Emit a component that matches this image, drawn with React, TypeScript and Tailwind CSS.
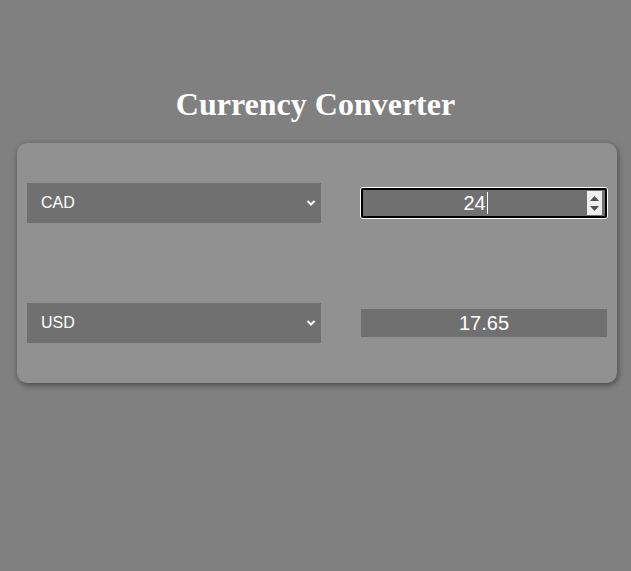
import React, { useState } from 'react';

const rates: Record<string, number> = { CAD: 1, USD: 0.7354, EUR: 0.68, GBP: 0.58 };

const CurrencySelect = ({ value, onChange }: { value: string; onChange: (v: string) => void }) => (
  <div className="relative w-[294px] h-10">
    <select
      value={value}
      onChange={(e) => onChange(e.target.value)}
      className="appearance-none w-full h-full bg-[#707070] text-white text-base pl-[14px] outline-none font-['Liberation_Sans',Arial,sans-serif]"
    >
      {Object.keys(rates).map((c) => (
        <option key={c} value={c}>
          {c}
        </option>
      ))}
    </select>
    {/* chevron */}
    <svg
      className="absolute right-[5px] top-[16px] pointer-events-none"
      width="10"
      height="8"
      viewBox="0 0 10 8"
      fill="none"
      stroke="white"
      strokeWidth="2"
    >
      <path d="M1.5 2l3.5 3.5L8.5 2" />
    </svg>
  </div>
);

export default function App() {
  const [from, setFrom] = useState('CAD');
  const [to, setTo] = useState('USD');
  const [amount] = useState(24);

  const result = ((amount / rates[from]) * rates[to]).toFixed(2);

  return (
    <div className="min-h-[571px] bg-[#808080] pt-[86px] font-['Liberation_Sans',Arial,sans-serif]">
      <h1 className="text-center text-white font-bold text-[32px] leading-[37px] font-['Liberation_Serif','Times_New_Roman',serif]">
        Currency Converter
      </h1>

      <div className="mx-[17px] mt-5 w-[600px] rounded-[10px] bg-[#919191] pl-[10px] pr-[9px] py-10 shadow-[1px_2px_6px_rgba(0,0,0,0.45)] flex flex-col gap-20">
        {/* from row */}
        <div className="flex items-center justify-between">
          <CurrencySelect value={from} onChange={setFrom} />
          <div className="relative w-[248px] h-8 rounded-[3px] border border-white">
            <div className="w-full h-full rounded-[2px] border-2 border-black bg-[#707070] pr-[17px] flex items-center justify-center text-white text-xl">
              <span>{amount}</span>
              <span className="w-px h-[22px] bg-white ml-[1px]" />
            </div>
            {/* spin buttons */}
            <div className="absolute right-[5px] top-[3px] w-[15px] h-6 bg-[#efefef] flex flex-col items-center justify-center gap-[5px]">
              <svg width="9" height="5" viewBox="0 0 9 5">
                <path d="M0 5L4.5 0L9 5Z" fill="#505050" />
              </svg>
              <svg width="9" height="5" viewBox="0 0 9 5">
                <path d="M0 0L4.5 5L9 0Z" fill="#505050" />
              </svg>
            </div>
          </div>
        </div>

        {/* to row */}
        <div className="flex items-center justify-between">
          <CurrencySelect value={to} onChange={setTo} />
          <div className="w-[246px] h-7 mr-px bg-[#707070] flex items-center justify-center text-white text-xl">
            {result}
          </div>
        </div>
      </div>
    </div>
  );
}
